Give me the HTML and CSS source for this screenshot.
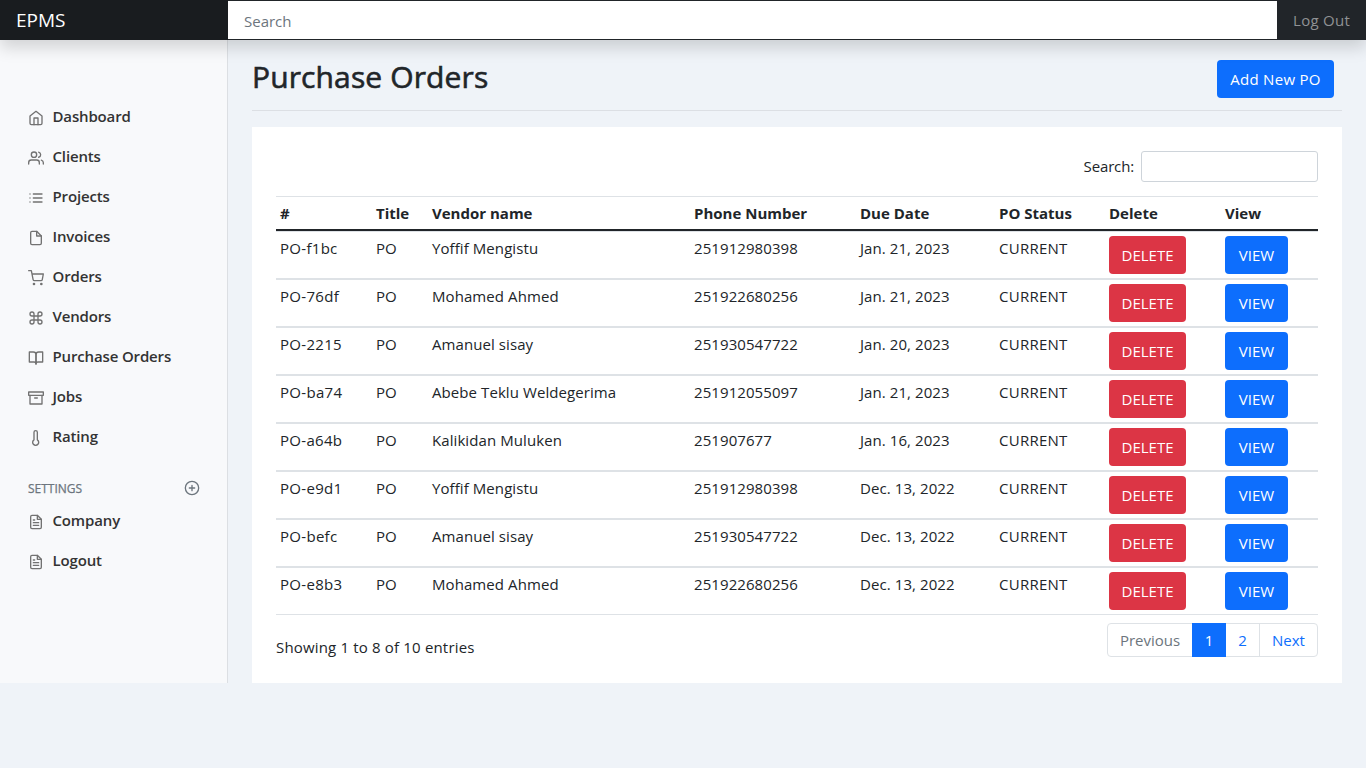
FILE: index.html
```html
<!DOCTYPE html>
<html lang="en">
<head>
<meta charset="utf-8">
<title>EPMS</title>
<link rel="stylesheet" href="styles.css">
</head>
<body>
<header class="topbar">
  <a class="brand">EPMS</a>
  <input class="top-search" type="text" placeholder="Search" aria-label="Search">
  <a class="logout">Log Out</a>
</header>
<div class="layout">
  <nav class="sidebar">
    <ul class="menu">
      <li><svg class="icon" viewBox="0 0 24 24"><path d="M3 9l9-7 9 7v11a2 2 0 0 1-2 2H5a2 2 0 0 1-2-2z"/><path d="M9 22V12h6v10"/></svg>Dashboard</li>
      <li><svg class="icon" viewBox="0 0 24 24"><path d="M17 21v-2a4 4 0 0 0-4-4H5a4 4 0 0 0-4 4v2"/><circle cx="9" cy="7" r="4"/><path d="M23 21v-2a4 4 0 0 0-3-3.87M16 3.13a4 4 0 0 1 0 7.75"/></svg>Clients</li>
      <li><svg class="icon" viewBox="0 0 24 24"><path d="M8 6h13M8 12h13M8 18h13M3 6h.01M3 12h.01M3 18h.01"/></svg>Projects</li>
      <li><svg class="icon" viewBox="0 0 24 24"><path d="M13 2H6a2 2 0 0 0-2 2v16a2 2 0 0 0 2 2h12a2 2 0 0 0 2-2V9z"/><path d="M13 2v7h7"/></svg>Invoices</li>
      <li><svg class="icon" viewBox="0 0 24 24"><circle cx="9" cy="21" r="1"/><circle cx="20" cy="21" r="1"/><path d="M1 1h4l2.68 13.39a2 2 0 0 0 2 1.61h9.72a2 2 0 0 0 2-1.61L23 6H6"/></svg>Orders</li>
      <li><svg class="icon" viewBox="0 0 24 24"><path d="M18 3a3 3 0 0 0-3 3v12a3 3 0 1 0 3-3H6a3 3 0 1 0 3 3V6a3 3 0 1 0-3 3h12a3 3 0 1 0 0-6z"/></svg>Vendors</li>
      <li><svg class="icon" viewBox="0 0 24 24"><path d="M2 3h6a4 4 0 0 1 4 4v14a3 3 0 0 0-3-3H2z"/><path d="M22 3h-6a4 4 0 0 0-4 4v14a3 3 0 0 1 3-3h7z"/></svg>Purchase Orders</li>
      <li><svg class="icon" viewBox="0 0 24 24"><path d="M21 8v13H3V8"/><path d="M1 3h22v5H1zM10 12h4"/></svg>Jobs</li>
      <li><svg class="icon" viewBox="0 0 24 24"><path d="M14 14.76V3.5a2.5 2.5 0 0 0-5 0v11.26a4.5 4.5 0 1 0 5 0z"/></svg>Rating</li>
    </ul>
    <h6 class="menu-title"><span>SETTINGS</span><svg class="icon" viewBox="0 0 24 24"><circle cx="12" cy="12" r="10"/><path d="M12 8v8M8 12h8"/></svg></h6>
    <ul class="menu">
      <li><svg class="icon" viewBox="0 0 24 24"><path d="M14 2H6a2 2 0 0 0-2 2v16a2 2 0 0 0 2 2h12a2 2 0 0 0 2-2V8z"/><path d="M14 2v6h6M16 13H8M16 17H8M10 9H8"/></svg>Company</li>
      <li><svg class="icon" viewBox="0 0 24 24"><path d="M14 2H6a2 2 0 0 0-2 2v16a2 2 0 0 0 2 2h12a2 2 0 0 0 2-2V8z"/><path d="M14 2v6h6M16 13H8M16 17H8M10 9H8"/></svg>Logout</li>
    </ul>
  </nav>
  <main class="content">
    <div class="page-head">
      <h1>Purchase Orders</h1>
      <button class="btn primary add">Add New PO</button>
    </div>
    <section class="card">
      <label class="filter"><span>Search:</span><input type="search"></label>
      <table class="orders">
        <colgroup><col class="c-id"><col class="c-title"><col class="c-vendor"><col class="c-phone"><col class="c-due"><col class="c-status"><col class="c-delete"><col class="c-view"></colgroup>
        <thead><tr><th>#</th><th>Title</th><th>Vendor name</th><th>Phone Number</th><th>Due Date</th><th>PO Status</th><th>Delete</th><th>View</th></tr></thead>
        <tbody>
          <tr><td class="id">PO-f1bc</td><td>PO</td><td>Yoffif Mengistu</td><td>251912980398</td><td>Jan. 21, 2023</td><td class="status">CURRENT</td><td><button class="btn danger">DELETE</button></td><td><button class="btn primary view">VIEW</button></td></tr>
          <tr><td class="id">PO-76df</td><td>PO</td><td>Mohamed Ahmed</td><td>251922680256</td><td>Jan. 21, 2023</td><td class="status">CURRENT</td><td><button class="btn danger">DELETE</button></td><td><button class="btn primary view">VIEW</button></td></tr>
          <tr><td class="id">PO-2215</td><td>PO</td><td>Amanuel sisay</td><td>251930547722</td><td>Jan. 20, 2023</td><td class="status">CURRENT</td><td><button class="btn danger">DELETE</button></td><td><button class="btn primary view">VIEW</button></td></tr>
          <tr><td class="id">PO-ba74</td><td>PO</td><td>Abebe Teklu Weldegerima</td><td>251912055097</td><td>Jan. 21, 2023</td><td class="status">CURRENT</td><td><button class="btn danger">DELETE</button></td><td><button class="btn primary view">VIEW</button></td></tr>
          <tr><td class="id">PO-a64b</td><td>PO</td><td>Kalikidan Muluken</td><td>251907677</td><td>Jan. 16, 2023</td><td class="status">CURRENT</td><td><button class="btn danger">DELETE</button></td><td><button class="btn primary view">VIEW</button></td></tr>
          <tr><td class="id">PO-e9d1</td><td>PO</td><td>Yoffif Mengistu</td><td>251912980398</td><td>Dec. 13, 2022</td><td class="status">CURRENT</td><td><button class="btn danger">DELETE</button></td><td><button class="btn primary view">VIEW</button></td></tr>
          <tr><td class="id">PO-befc</td><td>PO</td><td>Amanuel sisay</td><td>251930547722</td><td>Dec. 13, 2022</td><td class="status">CURRENT</td><td><button class="btn danger">DELETE</button></td><td><button class="btn primary view">VIEW</button></td></tr>
          <tr><td class="id">PO-e8b3</td><td>PO</td><td>Mohamed Ahmed</td><td>251922680256</td><td>Dec. 13, 2022</td><td class="status">CURRENT</td><td><button class="btn danger">DELETE</button></td><td><button class="btn primary view">VIEW</button></td></tr>
        </tbody>
      </table>
      <footer class="table-foot">
        <span class="info">Showing 1 to 8 of 10 entries</span>
        <div class="pages"><a class="prev">Previous</a><a class="current">1</a><a class="page">2</a><a class="next">Next</a></div>
      </footer>
    </section>
  </main>
</div>
</body>
</html>
```
FILE: styles.css
```css
* { box-sizing: border-box; }

body {
  margin: 0;
  background: #eff3f8;
  color: #212529;
  font: 15px/24px "Open Sans", "Noto Sans", sans-serif;
}

.topbar {
  position: relative;
  display: flex;
  height: 40px;
  background: #212529;
  box-shadow: 0 8px 16px rgba(0, 0, 0, .15);
}

.brand {
  width: 228px;
  padding-left: 16px;
  background: #191c1f;
  color: #fff;
  font-size: 19px;
  line-height: 41px;
}

.top-search {
  flex: 1;
  height: 38px;
  margin: 1px 0;
  padding: 2px 16px 0;
  border: 0;
  font: inherit;
}

.top-search::placeholder { color: #6c757d; }

.logout {
  width: 89px;
  padding-left: 16px;
  color: #909294;
  letter-spacing: .3px;
  line-height: 41px;
  white-space: nowrap;
}

.layout { display: flex; height: 643px; }

.sidebar {
  width: 228px;
  padding-top: 56px;
  background: #f8f9fb;
  border-right: 1px solid #dcdfe3;
}

.menu { margin: 0; padding: 0; list-style: none; }

.menu li {
  display: flex;
  align-items: center;
  gap: 8.5px;
  height: 40px;
  padding-left: 28px;
  color: #333;
  font-weight: 600;
  letter-spacing: -.15px;
}

.icon {
  flex: none;
  width: 16px;
  height: 16px;
  margin-top: 3px;
  fill: none;
  stroke: #727272;
  stroke-width: 2;
  stroke-linecap: round;
  stroke-linejoin: round;
}

.menu-title {
  display: flex;
  align-items: center;
  justify-content: space-between;
  height: 20px;
  margin: 22px 0 2px;
  padding: 0 27px 0 28px;
  color: #6c757d;
  font-size: 12px;
  font-weight: 500;
  -webkit-text-stroke: .25px #6c757d;
}

.menu-title span { padding-top: 1px; }
.menu-title .icon { margin-top: 0; stroke: #6c757d; }

.content { flex: 1; padding: 0 24px; }

.page-head {
  display: flex;
  justify-content: space-between;
  height: 71px;
  margin-bottom: 16px;
  padding: 20px 8px 0 0;
  border-bottom: 1px solid #dcdfe4;
}

h1 {
  margin: -2px 0 0;
  font-size: 30px;
  font-weight: 500;
  letter-spacing: .13px;
  line-height: 38px;
  -webkit-text-stroke: .6px #212529;
}

.btn {
  display: block;
  height: 38px;
  padding: 0 0 1px;
  border: 0;
  border-radius: 4px;
  color: #fff;
  font: inherit;
}

.primary { background: #0d6efd; }
.danger { width: 77px; background: #dc3545; }
.view { width: 63px; }
.add { width: 117px; letter-spacing: .3px; }

.card {
  height: 556px;
  padding: 24px 24px 0;
  background: #fff;
}

.filter {
  display: flex;
  justify-content: flex-end;
  align-items: center;
  gap: 7px;
  height: 31px;
}

.filter span { padding-bottom: 2px; letter-spacing: -.15px; }

.filter input {
  width: 177px;
  height: 31px;
  border: 1px solid #ced4da;
  border-radius: 3px;
}

.orders {
  width: 1042px;
  margin-top: 14px;
  table-layout: fixed;
  border-collapse: separate;
  border-spacing: 0;
}

.c-id { width: 96px; }
.c-title { width: 56px; }
.c-vendor { width: 262px; }
.c-phone { width: 166px; }
.c-due { width: 139px; }
.c-status { width: 110px; }
.c-delete { width: 116px; }
.c-view { width: 97px; }

th {
  height: 35px;
  padding: 4px;
  border-top: 1px solid #dee2e6;
  border-bottom: 2px solid #212529;
  text-align: left;
  font-weight: 700;
  white-space: nowrap;
}

td {
  height: 48px;
  padding: 4px;
  border-top: 1px solid #dee2e6;
  border-bottom: 1px solid #dee2e6;
  letter-spacing: .08px;
  vertical-align: top;
  white-space: nowrap;
}

.id { letter-spacing: .3px; }
.status { letter-spacing: .25px; }

.table-foot {
  display: flex;
  justify-content: space-between;
  margin-top: 8px;
}

.info { padding-top: 12px; letter-spacing: .17px; }

.pages {
  display: flex;
  width: 211px;
  height: 34px;
  border: 1px solid #dee2e6;
  border-radius: 4px;
  color: #0d6efd;
  line-height: 33px;
  text-align: center;
}

.prev { width: 84px; color: #6c757d; }
.current { width: 34px; margin: -1px 0; padding-top: 1px; background: #0d6efd; color: #fff; }
.page { width: 34px; border-right: 1px solid #dee2e6; }
.next { flex: 1; }
```
